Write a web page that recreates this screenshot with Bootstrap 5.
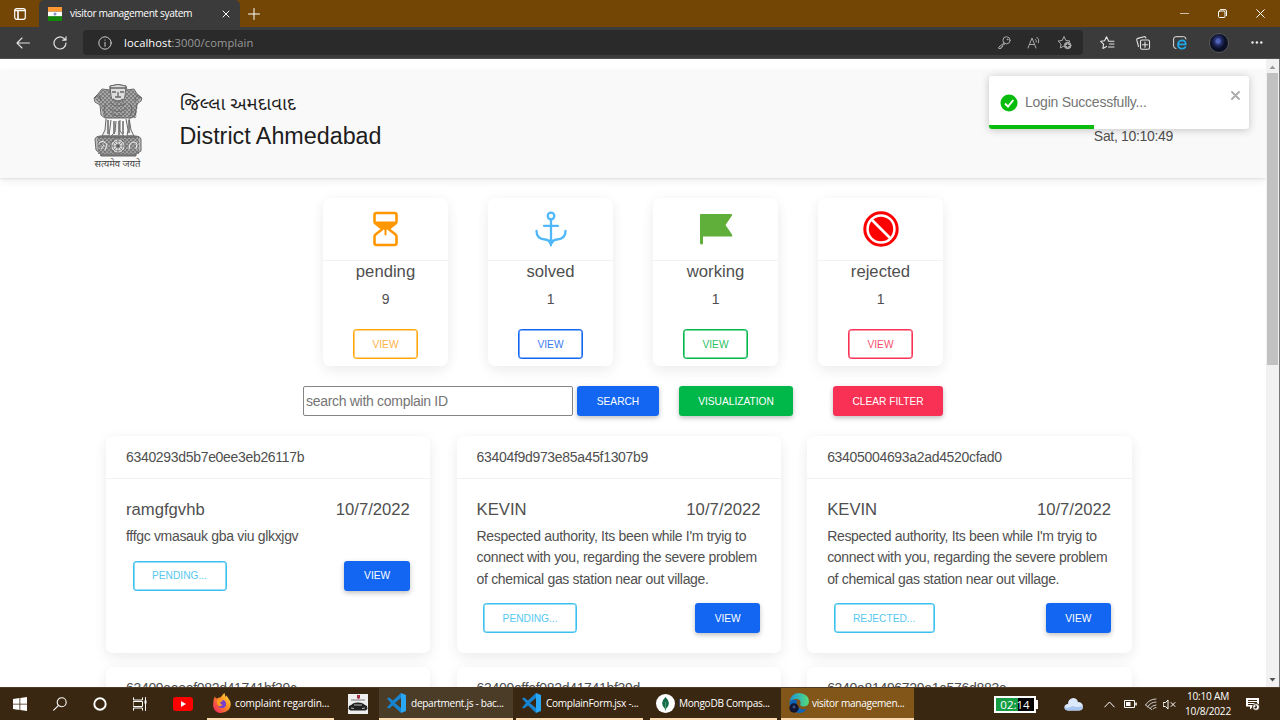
<!DOCTYPE html>
<html lang="en">
<head>
<meta charset="utf-8">
<meta name="viewport" content="width=device-width, initial-scale=1">
<title>visitor management syatem</title>
<link href="https://cdn.jsdelivr.net/npm/bootstrap@5.3.0/dist/css/bootstrap.min.css" rel="stylesheet">
<style>
:root{--ui:"Open Sans","Noto Sans",sans-serif;--page:"Liberation Sans",Arial,sans-serif}
body{width:1280px;height:720px;overflow:hidden;font-family:var(--page);font-size:14px;letter-spacing:-.32px;line-height:21.33px;color:#4f4f4f;background:#fff}
svg{display:block;flex:none}
.ln{fill:none;stroke:currentColor;stroke-linecap:round;stroke-linejoin:round}
/* browser chrome */
.titlebar{height:27px;background:#734605;font-family:var(--ui);color:#fff}
.tabsicon{width:39px;padding-left:14px}
.tab-item{width:201px;height:27px;background:#3b3b3b;border-radius:5px 5px 0 0;font-size:10.2px;padding:0 10px 0 9px}
.tab-item span{letter-spacing:-.4px;width:153px}
.toolbar{height:32px;background:#3b3b3b;color:#e4e4e4;border-bottom:1px solid #505050}
.address{width:1000px;height:25px;background:#2a2a2a;border-radius:4px;font:11.2px var(--ui);letter-spacing:-.1px;color:#999;margin-left:16px}
.address b{font-weight:400;color:#fff}
.avatar{width:20px;height:20px;border-radius:50%;background:radial-gradient(ellipse at 45% 40%,#5263b8 0 12%,#26306e 25%,#0b1024 50%);border:1px solid #555}
/* page */
.viewport{height:628px;overflow:hidden}
.sheet{width:1266px;overflow:hidden;height:628px}
.site-head{margin-top:11px;height:108px;background:#f9f9f9;box-shadow:0 3px 8px rgba(0,0,0,.07),0 1px 2px rgba(0,0,0,.08);padding-left:92px;color:#1d1d1d;flex:none}
.titles{margin-left:35.5px;padding-top:20px;letter-spacing:0}
.titles .gu{font:18.6px/32px "Noto Sans Gujarati","Lohit Gujarati","Noto Sans",sans-serif}
.titles .en{font-size:23.3px;line-height:29px}
.clock{margin:56px 93px 0 auto;color:#4f4f4f}
.panel{border:0;border-radius:6.5px;box-shadow:0 2px 13px rgba(0,0,0,.06),0 8px 17px rgba(0,0,0,.03);color:#4f4f4f;background:#fff}
.stats{gap:40px;margin-top:20px;margin-left:323px}
.stat{width:125px;height:168px}
.stat-ico{height:63px;border-bottom:1px solid #f2f2f2;margin-bottom:1px}
.stat h5,.ticket h5{font-size:16.67px;line-height:20px;font-weight:400;margin:0;letter-spacing:0}
.btx{font-size:10.2px;letter-spacing:0;font-weight:400;line-height:15px;height:30px;border-radius:3.3px;padding:0;text-transform:uppercase;display:flex;align-items:center;justify-content:center;white-space:nowrap}
.fill{color:#fff!important;box-shadow:0 2px 5px rgba(0,0,0,.25)}
.line-btn{border:1px solid currentColor;box-shadow:inset 0 0 0 .6px currentColor}
.line-btn span{opacity:.85}
.b-amber{border-color:#ffa900;color:#ffa51f}.b-blue{border-color:#1266f1;color:#1266f1}
.b-green{border-color:#00b74a;color:#00b74a}.b-red{border-color:#f93154;color:#f93154}
.b-cyan{border-color:#39c0ed;color:#39c0ed}
.f-blue{background:#1266f1}.f-green{background:#00b74a}.f-red{background:#f93154}
.view{width:65.5px}
.search{margin:20px 0 0 303px}
.search input{width:270px;height:30px;border:1px solid #858585;border-radius:2px;padding:0 2px;font-size:14px;letter-spacing:-.3px;background:#fff;color:#757575}
.search input::placeholder{color:#757575}
.tickets{display:grid;grid-template-columns:repeat(3,324.4px);gap:13.5px 26.2px;margin:20px 0 0 106px}
.ticket{height:217px}
.ticket-id{height:43px;border-bottom:1px solid #f2f2f2;padding:0 20px;line-height:42px}
.ticket-body{padding:21px 20.5px 0 20px}
.ticket p{margin:6px 0 0;line-height:21.33px}
.ticket-act{padding:13.5px 0 0 6.5px}
.scroller{width:14px;background:#f1f1f1;border-right:1px solid #777}
.thumb{width:11px;height:292px;background:#c1c1c1;margin-left:1px}
.snack{left:989px;top:76px;width:260px;height:53px;background:#fff;border-radius:3px;box-shadow:0 1px 9px rgba(0,0,0,.22);color:#757575;overflow:hidden;padding-left:11px}
.snack-bar{height:4px;background:#07bc0c;left:0;bottom:0}
/* taskbar */
.taskbar{height:33px;background:#3a2711;color:#fff;font:10.1px var(--ui);letter-spacing:-.3px;border-top:1px solid #4e3b27}
.slot{height:32px;width:40px}
.app{height:32px;border-bottom:2px solid #fcdcb0;width:127px;margin-right:7px;padding-left:6px;gap:4px;white-space:nowrap;flex:none}
.app.lit{background:#4b3c27;width:134px;padding-left:8px;margin-right:3px}
.app.on{background:#825618;width:133px;padding-left:8px;margin:0}
.batt{width:42px;height:17px;border:2px solid #fff;background:linear-gradient(90deg,#169c43 58%,#000 58%);font-size:11.5px;line-height:13px;letter-spacing:0}
</style>
</head>
<body>
<svg width="0" height="0" class="position-absolute">
  <defs>
    <g id="code"><path fill="#1684d0" d="M14 0 6 7.500 2 4.500 0 5.500 4 10 0 14.500l2 1 4-3L14 20l0-5-6.200-5L14 5z"/><path fill="#29a7f2" d="m14 0 5 2v16l-5 2z"/></g>
  </defs>
</svg>

<div class="titlebar d-flex align-items-center">
  <div class="tabsicon"><svg width="12" height="12" class="ln" stroke-width="1.200"><rect x=".7" y=".7" width="10.600" height="10.600" rx="2"/><path d="M1 2.500h10M4 3v8" stroke-width="1.600"/></svg></div>
  <div class="tab-item d-flex align-items-center">
    <svg width="14" height="14"><path fill="#ff9733" d="M0 0h14v4.700H0z"/><path fill="#fff" d="M0 4.700h14v4.800H0z"/><path fill="#138808" d="M0 9.300h14V14H0z"/><circle cx="7" cy="7" r="1.500" fill="#8a90ca"/></svg>
    <span class="ms-2">visitor management syatem</span>
    <svg width="8" height="8" class="ln" stroke-width="1"><path d="m1 1 6 6M7 1 1 7"/></svg>
  </div>
  <svg width="12" height="12" class="ln" style="margin-left:8px" stroke-width="1"><path d="M6 .5v11M.5 6h11"/></svg>
  <div class="d-flex align-items-center ms-auto" style="gap:29px;padding-right:15px">
    <svg width="9" height="9" class="ln" stroke-width="1" opacity=".65"><path d="M0 4.500h9"/></svg>
    <svg width="9" height="9" class="ln" stroke-width="1"><rect x=".5" y="2" width="6.500" height="6.500" rx="1"/><path d="M2.500.6H7q1.500 0 1.500 1.500v4.500"/></svg>
    <svg width="9" height="9" class="ln" stroke-width="1"><path d="m.7.700 7.600 7.600M8.300.700.700 8.300"/></svg>
  </div>
</div>

<div class="toolbar d-flex align-items-center">
  <svg width="14" height="12" class="ln" style="margin-left:16px" stroke-width="1.100"><path d="M13.500 6H1M6 1 1 6l5 5"/></svg>
  <svg width="14" height="14" class="ln" style="margin-left:23px" stroke-width="1.200"><path d="M13 7a6 6 0 1 1-2-4.500L12.500 4M13 .8V4.200H9.600"/></svg>
  <div class="address d-flex align-items-center">
    <svg width="14" height="14" class="ln" style="margin:0 12px 0 15px" stroke-width="1" color="#ccc"><circle cx="7" cy="7" r="6.200"/><path d="M7 6.300v4M7 4v.2"/></svg>
    <span style="letter-spacing:.08px"><b>localhost</b>:3000/complain</span>
    <div class="d-flex align-items-center ms-auto" style="gap:16px;padding-right:11px;color:#aaa">
      <svg width="13" height="13" viewBox="0 0 13 13" class="ln" stroke-width="1"><circle cx="8.500" cy="4.300" r="3.600"/><path d="m6 7-5.200 4V12.500H3V11h1.500V9.500L7 7.800"/><circle cx="9.500" cy="3.400" r=".4"/></svg>
      <svg width="14" height="13" class="ln" stroke-width="1"><path d="m1 12 4-10 4 10M2.500 8.500h5M8.500 3.500q1.200 1 .8 2.500M10 1.300q3 2.200 1.500 5.500"/></svg>
      <svg width="15" height="15" class="ln" stroke-width="1"><path d="M7 11 3.300 13l.8-4L1 6l4.200-.5L7 1.500l1.800 4L13 6l-1 1"/><circle cx="10.700" cy="10.500" r="3.300" fill="#aaa"/><path stroke="#2a2a2a" d="M9.200 10.500h3M10.700 9v3"/></svg>
    </div>
  </div>
  <svg width="15" height="14" class="ln" style="margin-left:17px" stroke-width="1.100"><path d="M8.500 4.800 6.500.8l-1.900 4L.7 5.300l2.900 2.900-.7 4.200 3.600-2M8.500 5.200H14M9.500 8H14M8.500 11H14"/></svg>
  <svg width="15" height="14" class="ln" style="margin-left:21px" stroke-width="1.100"><rect x="4.500" y="4" width="9" height="9.300" rx="1.500"/><path d="M9 6v5.300M6.400 8.700h5.200M2.500 10.500 .8 4.200Q.5 2.800 1.800 2.400L8 .7q1.500-.2 1.900 1.300"/></svg>
  <svg width="14" height="14" viewBox="0 0 14 14" class="ln" style="margin-left:22px" stroke-width="1"><path d="M3 12.500Q.6 12.500.6 10V3Q.6.7 3 .7h7.500Q13 .7 13 3"/><path d="M5.500 8.400h7.300Q12.600 4.300 9 4.300 5.200 4.500 5 8.600q.2 4 4 4 2.500 0 3.400-1.600" stroke="#21a8e8" stroke-width="1.700"/></svg>
  <div class="avatar" style="margin-left:22px"></div>
  <svg width="12" height="3" fill="#eee" style="margin-left:22px"><circle cx="1.500" cy="1.500" r="1.200"/><circle cx="5.900" cy="1.500" r="1.200"/><circle cx="10.300" cy="1.500" r="1.200"/></svg>
</div>

<div class="viewport d-flex">
  <main class="sheet d-flex flex-column">
    <header class="site-head d-flex">
      <svg width="52" height="86" viewBox="0 0 52 86" style="margin-top:13.500px" fill="none" stroke="#686868" stroke-width="1">
        <defs><pattern id="fur" width="4" height="4" patternUnits="userSpaceOnUse"><path d="M0 1q1-1 2 0t2 0M0 3q1 1 2 0t2 0" stroke="#555" stroke-width=".9"/><path d="M1 0v2M3 2v2" stroke="#888" stroke-width=".6"/></pattern></defs>
        <path fill="#c4c4c4" d="M18 2q8-3 16 0l1 4 7-1 3 5 5 4-1 3-4 3-1 6-1 6-4 2H13l-4-3-1-10-5-3-1-4 4-4 4-5 8 1z"/>
        <path fill="url(#fur)" stroke="none" d="M10 6h32l7 8-3 5-2 15H12L8 20l-5-5z"/>
        <path fill="#ddd" d="M18 2q8-3 16 0l-1 10q-1 6-7 6t-7-6z"/>
        <path d="M18 4h16M20 8h4m4 0h4M26 8v5m-3 0h6M21 15q5 4 10 0" stroke-width="1.300"/>
        <path d="M3 14q5-6 6 3M49 14q-5-6-6 3M14 20q-4 6 0 12M38 20q4 6 0 12M18 19q8 6 16 0M17 24q9 7 18 0M19 29q7 6 14 0"/>
        <path fill="#eee" d="m14 35-1 11-3 6h7l2-16m5 1-1 11-4 4h13l-4-5V36m6-1 2 11-1 6h7l-3-6-2-12"/>
        <path d="M16 36v14M22 37v13M27 37v14M31 37v13M37 36v13" stroke-width="1.500"/>
        <path fill="#bbb" d="M8 52h36q4 0 5 3v12l-5 3v2H9v-2l-5-4-1-11q1-3 5-3z"/>
        <path fill="url(#fur)" stroke="none" d="M5 53h42v17H6z"/>
        <circle cx="26" cy="62" r="7.200" fill="#ddd"/><circle cx="26" cy="62" r="5" stroke-width=".7"/><path d="M26 55v14M19 62h14M21 57l10 10M31 57 21 67" stroke-width=".7"/><circle cx="26" cy="62" r="1.300" fill="#444"/>
        <path stroke="#eee" d="M7 59q4-4 8 2l-2 5M37 65l1-5q4-4 7 0l-1 5M9 65l3-4"/>
        <path d="M7 53h38M8 71h36" stroke-width="1.500"/>
        <text x="25.500" y="83" text-anchor="middle" textLength="46" lengthAdjust="spacingAndGlyphs" letter-spacing="0" font-family="Noto Sans Devanagari, Noto Sans, sans-serif" font-size="9" fill="#444" stroke="none">सत्यमेव जयते</text>
      </svg>
      <div class="titles"><div class="gu">જિલ્લા અમદાવાદ</div><div class="en">District Ahmedabad</div></div>
      <div class="clock">Sat, 10:10:49</div>
    </header>

    <section class="stats d-flex">
      <div class="card panel stat align-items-center">
        <div class="stat-ico w-100 d-flex justify-content-center align-items-center">
          <svg width="26" height="36" viewBox="0 0 26 36" class="ln" color="#ff9800" stroke-width="2.600"><path d="M3.500 2h18q2 0 2 2v6.500q0 1.200-1 2L15.500 18l7 5.500q1 1 1 2V32q0 2-2 2h-18q-2 0-2-2v-6.500q0-1 1-2l7-5.500-7-5.500q-1-.8-1-2V4q0-2 2-2z"/><path d="m3.500 11.500 9 7 9-7zM12.500 18v5.500" fill="currentColor" stroke-width="2"/></svg>
        </div>
        <h5>pending</h5><div class="mt-2 lh-1" style="padding-top:2px">9</div>
        <button class="btn btx line-btn b-amber view mt-auto" style="margin-bottom:7px"><span>View</span></button>
      </div>
      <div class="card panel stat align-items-center">
        <div class="stat-ico w-100 d-flex justify-content-center align-items-center">
          <svg width="32" height="36" viewBox="0 0 32 36" class="ln" color="#50b8fa" stroke-width="2.300"><circle cx="16" cy="5" r="3.300"/><path d="M16 9v23M9 14.800h14M1.500 20q0 8 8.500 8.500 4.500.3 6 5 1.500-4.700 6-5 8.500-.5 8.500-8.500"/><path fill="currentColor" stroke-width="1" d="M14 29h4l-2 6z"/></svg>
        </div>
        <h5>solved</h5><div class="mt-2 lh-1" style="padding-top:2px">1</div>
        <button class="btn btx line-btn b-blue view mt-auto" style="margin-bottom:7px"><span>View</span></button>
      </div>
      <div class="card panel stat align-items-center">
        <div class="stat-ico w-100 d-flex justify-content-center align-items-center">
          <svg width="34" height="32" viewBox="0 0 34 32" fill="#5faf3a"><path d="M2 1h30q1.800 0 1 1.500L26.500 12l6.500 9.500q1 2-1 2H4V30q0 1.500-1.500 1.500T1 30V2q0-1 1-1z"/></svg>
        </div>
        <h5>working</h5><div class="mt-2 lh-1" style="padding-top:2px">1</div>
        <button class="btn btx line-btn b-green view mt-auto" style="margin-bottom:7px"><span>View</span></button>
      </div>
      <div class="card panel stat align-items-center">
        <div class="stat-ico w-100 d-flex justify-content-center align-items-center">
          <svg width="36" height="36" viewBox="0 0 36 36"><circle cx="18" cy="18" r="16.200" fill="#fff" stroke="#f00" stroke-width="3"/><circle cx="18" cy="18" r="12.200" fill="#f00"/><path d="m9 9 18 18" stroke="#fff" stroke-width="2.600"/></svg>
        </div>
        <h5>rejected</h5><div class="mt-2 lh-1" style="padding-top:2px">1</div>
        <button class="btn btx line-btn b-red view mt-auto" style="margin-bottom:7px"><span>View</span></button>
      </div>
    </section>

    <form class="search d-flex">
      <input type="text" placeholder="search with complain ID">
      <button type="button" class="btn btx fill f-blue border-0" style="width:82px;margin-left:4px">Search</button>
      <button type="button" class="btn btx fill f-green border-0" style="width:114px;margin-left:20px">Visualization</button>
      <button type="button" class="btn btx fill f-red border-0" style="width:110px;margin-left:40px">Clear filter</button>
    </form>

    <section class="tickets">
      <div class="card panel ticket">
        <div class="ticket-id">6340293d5b7e0ee3eb26117b</div>
        <div class="ticket-body"><div class="d-flex justify-content-between"><h5>ramgfgvhb</h5><h5>10/7/2022</h5></div>
          <p>fffgc vmasauk gba viu glkxjgv</p>
          <div class="ticket-act d-flex justify-content-between"><button class="btn btx line-btn b-cyan" style="width:94px"><span>Pending...</span></button><button class="btn btx fill f-blue border-0 view">View</button></div></div>
      </div>
      <div class="card panel ticket">
        <div class="ticket-id">63404f9d973e85a45f1307b9</div>
        <div class="ticket-body"><div class="d-flex justify-content-between"><h5>KEVIN</h5><h5>10/7/2022</h5></div>
          <p>Respected authority, Its been while I'm tryig to<br>connect with you, regarding the severe problem<br>of chemical gas station near out village.</p>
          <div class="ticket-act d-flex justify-content-between"><button class="btn btx line-btn b-cyan" style="width:94px"><span>Pending...</span></button><button class="btn btx fill f-blue border-0 view">View</button></div></div>
      </div>
      <div class="card panel ticket">
        <div class="ticket-id">63405004693a2ad4520cfad0</div>
        <div class="ticket-body"><div class="d-flex justify-content-between"><h5>KEVIN</h5><h5>10/7/2022</h5></div>
          <p>Respected authority, Its been while I'm tryig to<br>connect with you, regarding the severe problem<br>of chemical gas station near out village.</p>
          <div class="ticket-act d-flex justify-content-between"><button class="btn btx line-btn b-cyan" style="width:101px"><span>Rejected...</span></button><button class="btn btx fill f-blue border-0 view">View</button></div></div>
      </div>
      <div class="card panel ticket"><div class="ticket-id">63409aeeef082d41741bf39c</div></div>
      <div class="card panel ticket"><div class="ticket-id">63409effef082d41741bf39d</div></div>
      <div class="card panel ticket"><div class="ticket-id">6340a81496729e1a576d883a</div></div>
    </section>
  </main>
  <div class="scroller d-flex flex-column">
    <svg width="13" height="14"><path d="m3.500 10 3-3.500 3 3.500z" fill="#999"/></svg>
    <div class="thumb"></div>
    <svg width="13" height="14" class="mt-auto"><path d="m3.500 5 3 3.500 3-3.500z" fill="#505050"/></svg>
  </div>
</div>

<div class="snack position-absolute d-flex align-items-center">
  <svg width="18" height="18" viewBox="0 0 18 18"><circle cx="9" cy="9" r="8.500" fill="#07bc0c"/><path d="m5 9.500 3 3 5.300-6.500" fill="none" stroke="#fff" stroke-width="1.900"/></svg>
  <span style="margin-left:7px;letter-spacing:-.24px">Login Successfully...</span>
  <svg width="9" height="9" class="ln ms-auto" color="#aaa" stroke-width="1.800" style="margin:0 9px 15px 0"><path d="m1 1 7 7M8 1 1 8"/></svg>
  <div class="snack-bar position-absolute" style="width:40.500%"></div>
</div>

<footer class="taskbar d-flex align-items-center">
  <div class="slot d-flex align-items-center justify-content-center"><svg width="14" height="14" fill="#fff"><path d="m0 2 6.500-1v5.700H0zM7.300.9 14 0v6.700H7.300zM0 7.400h6.500V13L0 12.100zM7.300 7.400H14V14l-6.700-.9z"/></svg></div>
  <div class="slot d-flex align-items-center justify-content-center"><svg width="14" height="14" class="ln" stroke-width="1.100"><circle cx="8.700" cy="5.300" r="4.500"/><path d="M5.300 8.700.7 13.200"/></svg></div>
  <div class="slot d-flex align-items-center justify-content-center"><svg width="14" height="14" class="ln" stroke-width="1.900"><circle cx="7" cy="7" r="5.700"/></svg></div>
  <div class="slot d-flex align-items-center justify-content-center"><svg width="14" height="14" class="ln" stroke-width="1"><path d="M.5.800V3h9V.800M.5 13.200V11h9v2.200M.5 4.500h9v5h-9zM12.500.500v3M12.500 6.500v7"/><path d="M12.500 4v2" stroke-width="2"/></svg></div>
  <div class="slot d-flex align-items-center justify-content-center" style="width:47px;padding-right:1px"><svg width="20" height="14"><rect width="20" height="14" rx="3" fill="#f00"/><path d="m8 4 5 3-5 3z" fill="#fff"/></svg></div>
  <div class="app d-flex align-items-center" style="letter-spacing:-.15px">
    <svg width="18" height="20" viewBox="0 0 18 20"><defs><linearGradient id="ff" x1="1" y1="0" x2="0" y2="1"><stop stop-color="#fff04b"/><stop offset=".45" stop-color="#ff8a22"/><stop offset="1" stop-color="#ed1867"/></linearGradient></defs><path fill="url(#ff)" d="M2 3q0 2 1.500 2.500L8 4q3-4 3.500-4l1 4 1-1.500L17 8q2 5-1.500 9-3.500 3-7.500 3-6 0-7.700-6Q-.5 8 2 3z"/><circle cx="9" cy="11" r="4" fill="#7540d0"/><path fill="#ff9d20" d="M4 7q3-1 5 0 2 1-1.500 2-1 2 2.500 3-5 3-6-2z"/></svg>
    complaint regardin...</div>
  <div class="slot d-flex align-items-center" style="width:38px;padding-left:7px"><svg width="20" height="20"><path fill="#eee" d="M0 0h20v20H0z"/><path fill="#a32c42" d="M9 1h3v3l-1.500 1L9 4z"/><path stroke="#777" d="M3 6h14"/><path fill="#202020" d="M1 12q3-1.500 4-2.500 5-2 10 0 2 1.500 4 2.500l.5 3-2 1.500h-15l-2-1.500z"/><path stroke="#bbb" d="M6 11h8M3 14l3 .5m8 0 3-.5"/></svg></div>
  <div class="app lit d-flex align-items-center"><svg width="20" height="20"><use href="#code"/></svg>department.js - bac...</div>
  <div class="app d-flex align-items-center"><svg width="20" height="20"><use href="#code"/></svg>ComplainForm.jsx -...</div>
  <div class="app d-flex align-items-center" style="margin-right:4px"><svg width="19" height="19"><circle cx="9.500" cy="9.500" r="9.500" fill="#fff"/><path d="M9.500 3q7 6.500 0 12.500-7-6 0-12.500z" fill="#146b4b"/><path d="M9.500 8v8.500" stroke="#4c9a70"/></svg>MongoDB Compas...</div>
  <div class="app on d-flex align-items-center" style="gap:3px">
    <svg width="20" height="20"><defs><linearGradient id="eg"><stop stop-color="#1893df"/><stop offset="1" stop-color="#57dc77"/></linearGradient></defs><path fill="url(#eg)" d="M.5 9Q2 0 10.500 0 20 1 20 8.500q-.5 5-5.500 5-4.500-.5-3-3Q12 6 7 6 3 6 .5 9z"/><path fill="#0c65b8" d="M.5 9Q4 5.500 8 7.500 6 14 12 16q4 1 6-.5-3 4.500-8 4.500Q0 19 .5 9z"/><circle cx="5" cy="15" r="4.700" fill="#111633"/><circle cx="5" cy="14" r="1.400" fill="#41548f"/></svg>
    visitor managemen...</div>
  <div class="d-flex align-items-center" style="margin-left:80px"><div class="batt text-center">02:14</div><svg width="2" height="9" fill="#fff"><path d="M0 0h2v9H0z"/></svg></div>
  <svg width="19" height="13" style="margin-left:26px"><path d="M4 12.500Q0 12 .5 8.500 1 6 4 6q0-5 5-6 4 0 5 4 4.500 0 5 4.500 0 4-4 4z" fill="#dce9fb"/><path d="M4 12.500Q0 12 .5 9q4 2 8-1 4 2 10 0 1 4-3.500 4.500z" fill="#a9c5ef"/></svg>
  <svg width="11" height="7" class="ln" style="margin-left:21px" stroke-width="1"><path d="m.7 6 4.800-5 4.800 5"/></svg>
  <svg width="13" height="9" style="margin-left:9px"><path fill="none" stroke="#fff" d="M.5.500h10v7H.5z"/><path fill="#fff" d="M2 2h4.500v4H2zM11.300 2.500h1.500v3h-1.500z"/></svg>
  <svg width="12" height="12" class="ln" style="margin-left:8px" stroke-width="1" color="#ccc"><path d="M.6 7Q4 1 11 1M2.500 9Q5.500 4 11 4M5 10.500Q7 7 11 7M8 11q1-1.500 3-1.500M.6 7l6 4.500"/></svg>
  <svg width="13" height="11" class="ln" style="margin-left:6px" stroke-width="1"><path d="M.6 3.500H2.500L5 1v9L2.500 7.500H.6zM8 3.500l4 4M12 3.500l-4 4"/></svg>
  <div class="text-center" style="width:60px;margin-left:2px;line-height:15px;letter-spacing:-.2px">10:10 AM<br>10/8/2022</div>
  <svg width="14" height="15" style="margin-left:8px"><path fill="#fff" d="M0 1h13v8.500H7l-3 3v-3H0z"/><path stroke="#3a2711" d="M2 3.500h9M2 5.500h9M2 7.500h5"/><circle cx="10" cy="10" r="3.500" fill="#fff" stroke="#3a2711"/><path fill="#3a2711" d="M9 7.500q3 1 1.500 4-1.500.5-3-1 3 0 1.500-3z"/></svg>
</footer>
<script src="https://cdn.jsdelivr.net/npm/bootstrap@5.3.0/dist/js/bootstrap.bundle.min.js"></script>
</body>
</html>
